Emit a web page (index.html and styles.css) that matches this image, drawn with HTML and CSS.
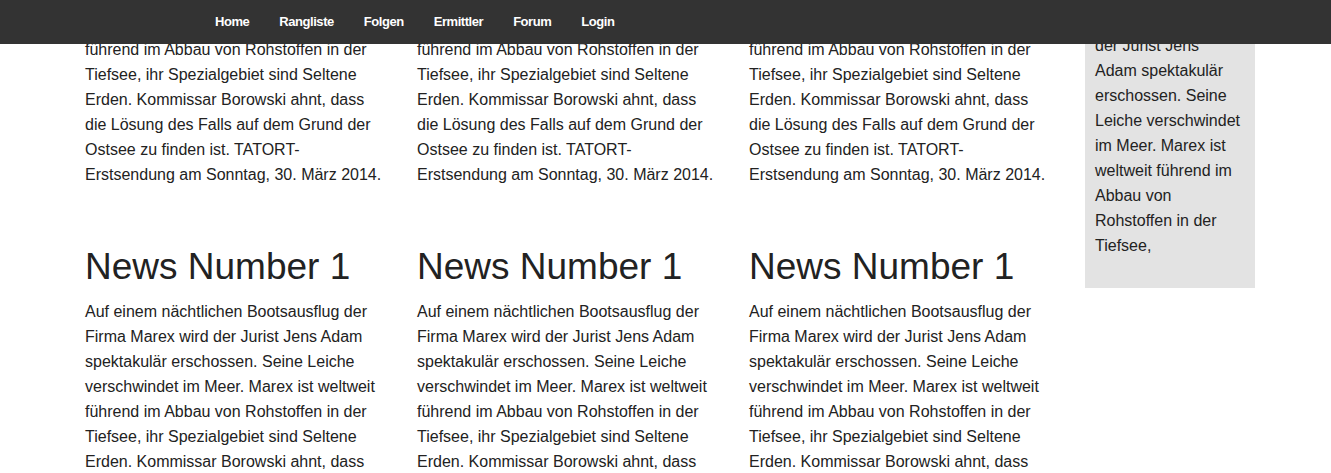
FILE: index.html
```html
<!DOCTYPE html>
<html lang="de">
<head>
<meta charset="utf-8">
<title>Tatort News</title>
<link rel="stylesheet" href="styles.css">
</head>
<body>
<nav class="navbar">
  <ul class="nav">
    <li><a href="#">Home</a></li>
    <li><a href="#">Rangliste</a></li>
    <li><a href="#">Folgen</a></li>
    <li><a href="#">Ermittler</a></li>
    <li><a href="#">Forum</a></li>
    <li><a href="#">Login</a></li>
  </ul>
</nav>
<div class="page">
  <main class="news-grid">
    <article class="news"><h1>News Number 1</h1><p>Auf einem nächtlichen Bootsausflug der Firma Marex wird der Jurist Jens Adam spektakulär erschossen. Seine Leiche verschwindet im Meer. Marex ist weltweit führend im Abbau von Rohstoffen in der Tiefsee, ihr Spezialgebiet sind Seltene Erden. Kommissar Borowski ahnt, dass die Lösung des Falls auf dem Grund der Ostsee zu finden ist. TATORT-Erstsendung am Sonntag, 30. März 2014.</p></article>
    <article class="news"><h1>News Number 1</h1><p>Auf einem nächtlichen Bootsausflug der Firma Marex wird der Jurist Jens Adam spektakulär erschossen. Seine Leiche verschwindet im Meer. Marex ist weltweit führend im Abbau von Rohstoffen in der Tiefsee, ihr Spezialgebiet sind Seltene Erden. Kommissar Borowski ahnt, dass die Lösung des Falls auf dem Grund der Ostsee zu finden ist. TATORT-Erstsendung am Sonntag, 30. März 2014.</p></article>
    <article class="news"><h1>News Number 1</h1><p>Auf einem nächtlichen Bootsausflug der Firma Marex wird der Jurist Jens Adam spektakulär erschossen. Seine Leiche verschwindet im Meer. Marex ist weltweit führend im Abbau von Rohstoffen in der Tiefsee, ihr Spezialgebiet sind Seltene Erden. Kommissar Borowski ahnt, dass die Lösung des Falls auf dem Grund der Ostsee zu finden ist. TATORT-Erstsendung am Sonntag, 30. März 2014.</p></article>
    <article class="news"><h1>News Number 1</h1><p>Auf einem nächtlichen Bootsausflug der Firma Marex wird der Jurist Jens Adam spektakulär erschossen. Seine Leiche verschwindet im Meer. Marex ist weltweit führend im Abbau von Rohstoffen in der Tiefsee, ihr Spezialgebiet sind Seltene Erden. Kommissar Borowski ahnt, dass die Lösung des Falls auf dem Grund der Ostsee zu finden ist. TATORT-Erstsendung am Sonntag, 30. März 2014.</p></article>
    <article class="news"><h1>News Number 1</h1><p>Auf einem nächtlichen Bootsausflug der Firma Marex wird der Jurist Jens Adam spektakulär erschossen. Seine Leiche verschwindet im Meer. Marex ist weltweit führend im Abbau von Rohstoffen in der Tiefsee, ihr Spezialgebiet sind Seltene Erden. Kommissar Borowski ahnt, dass die Lösung des Falls auf dem Grund der Ostsee zu finden ist. TATORT-Erstsendung am Sonntag, 30. März 2014.</p></article>
    <article class="news"><h1>News Number 1</h1><p>Auf einem nächtlichen Bootsausflug der Firma Marex wird der Jurist Jens Adam spektakulär erschossen. Seine Leiche verschwindet im Meer. Marex ist weltweit führend im Abbau von Rohstoffen in der Tiefsee, ihr Spezialgebiet sind Seltene Erden. Kommissar Borowski ahnt, dass die Lösung des Falls auf dem Grund der Ostsee zu finden ist. TATORT-Erstsendung am Sonntag, 30. März 2014.</p></article>
  </main>
  <aside class="sidebar">
    <p>Auf einem nächtlichen Bootsausflug der Firma Marex wird der Jurist Jens Adam spektakulär erschossen. Seine Leiche verschwindet im Meer. Marex ist weltweit führend im Abbau von Rohstoffen in der Tiefsee,</p>
  </aside>
</div>
</body>
</html>
```
FILE: styles.css
```css
html, body {
  margin: 0;
  padding: 0;
  background: #fff;
}
body {
  font-family: "Liberation Sans", Arial, Helvetica, sans-serif;
  font-size: 16px;
  line-height: 25px;
  color: #222;
  overflow: hidden;
}
.navbar {
  position: fixed;
  top: 0;
  left: 0;
  right: 0;
  height: 44px;
  background: #333;
  z-index: 10;
}
.nav {
  list-style: none;
  margin: 0;
  padding: 0 0 0 200px;
  display: flex;
  height: 44px;
  align-items: center;
}
.nav a {
  display: block;
  padding: 0 15px;
  color: #fff;
  font-size: 13px;
  font-weight: bold;
  letter-spacing: -0.45px;
  line-height: 20px;
  text-decoration: none;
}
.page {
  display: flex;
  align-items: flex-start;
  padding-left: 85px;
  margin-top: -116px;
}
.news-grid {
  display: grid;
  grid-template-columns: repeat(3, 302px);
  column-gap: 30px;
  row-gap: 60px;
}
.news h1 {
  font-size: 37px;
  font-weight: normal;
  line-height: 39.6px;
  margin: 0 0 13px;
}
.news p {
  margin: 0;
}
.sidebar {
  width: 146px;
  margin-left: 34px;
  margin-top: 39px;
  padding: 10px 14px 30px 10px;
  background: #e3e3e3;
}
.sidebar p {
  margin: 0;
}
```
